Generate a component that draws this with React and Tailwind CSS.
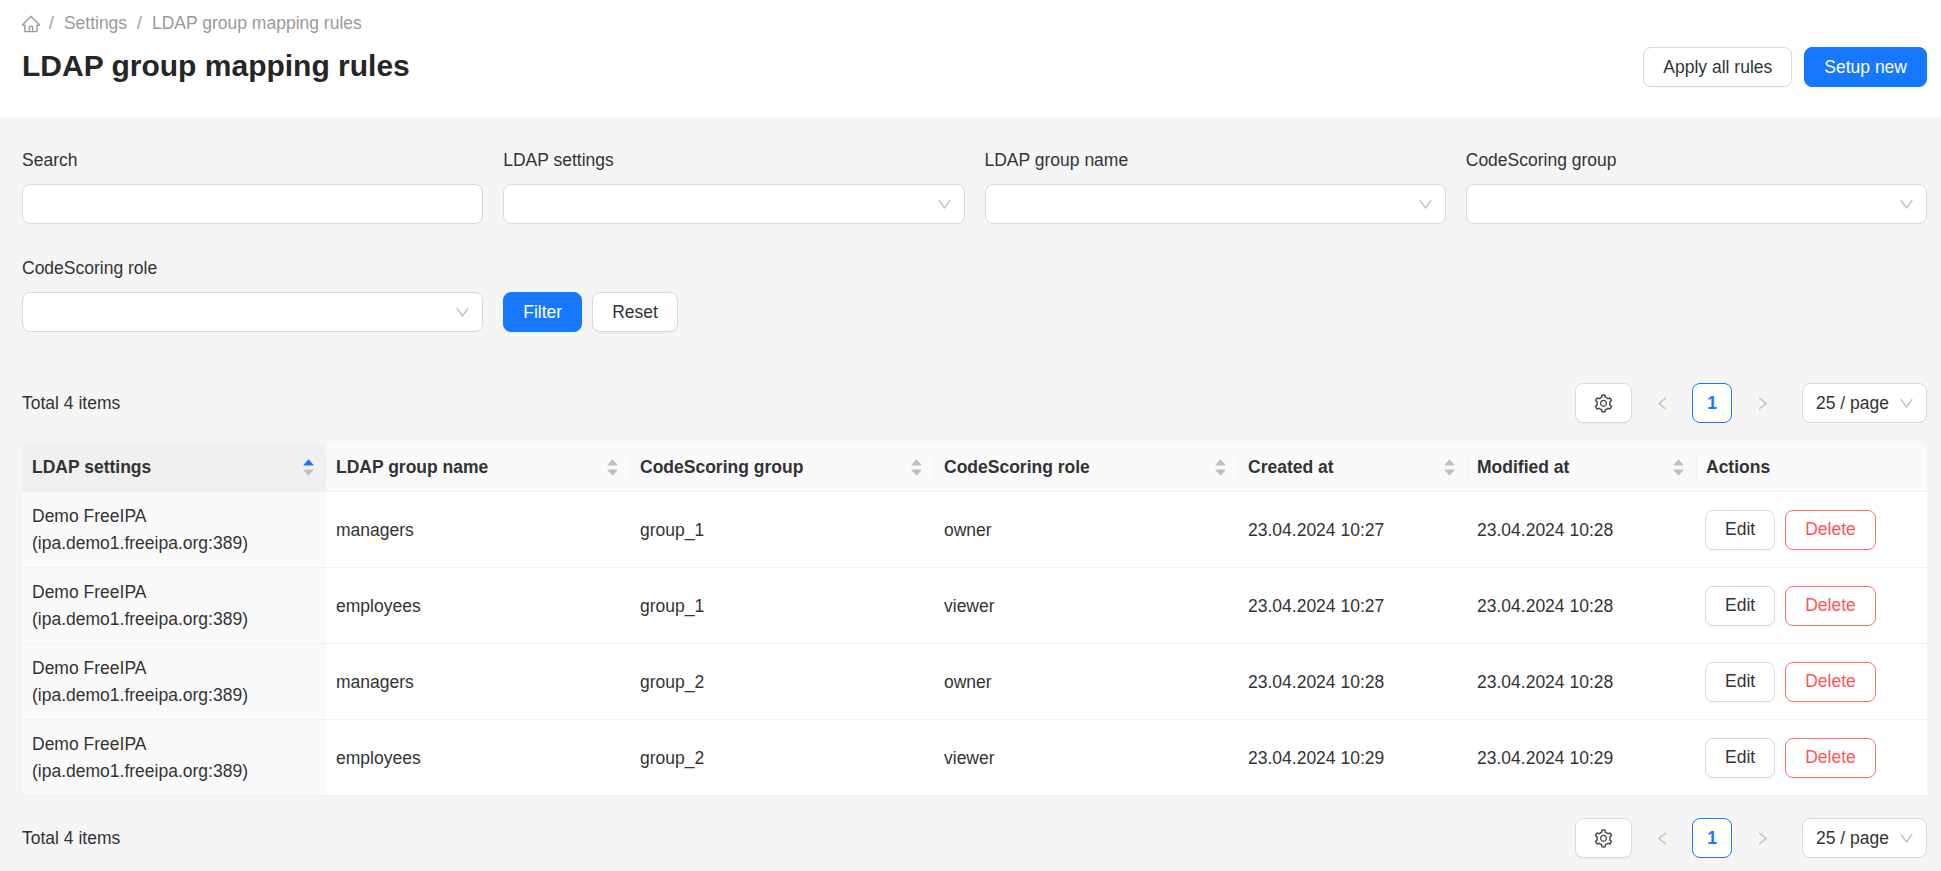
import { AiOutlineHome, AiOutlineSetting, AiOutlineDown, AiOutlineLeft, AiOutlineRight, AiFillCaretUp, AiFillCaretDown } from 'react-icons/ai';

const rows = [
  { group: 'managers', cs: 'group_1', role: 'owner', created: '23.04.2024 10:27', modified: '23.04.2024 10:28' },
  { group: 'employees', cs: 'group_1', role: 'viewer', created: '23.04.2024 10:27', modified: '23.04.2024 10:28' },
  { group: 'managers', cs: 'group_2', role: 'owner', created: '23.04.2024 10:28', modified: '23.04.2024 10:28' },
  { group: 'employees', cs: 'group_2', role: 'viewer', created: '23.04.2024 10:29', modified: '23.04.2024 10:29' },
];

const headers = ['LDAP settings', 'LDAP group name', 'CodeScoring group', 'CodeScoring role', 'Created at', 'Modified at'];

const Btn = ({ children, className = '' }) => (
  <button className={`h-10 px-[19px] rounded-lg border border-[#d9d9d9] bg-white text-[#333333] text-[17.5px] shadow-[0_2px_0_rgba(0,0,0,0.02)] whitespace-nowrap ${className}`}>
    {children}
  </button>
);

const Field = ({ label, select }) => (
  <div>
    <div className="h-[27px] leading-[27px] mb-[10px] text-[#333333]">{label}</div>
    <div className="h-10 pr-[11px] rounded-lg border border-[#d9d9d9] bg-white flex items-center justify-end">
      {select && <AiOutlineDown className="w-[17px] h-[17px] text-[#bfbfbf]" />}
    </div>
  </div>
);

const Toolbar = () => (
  <div className="flex items-center h-10">
    <span className="flex-1 text-[#333333]">Total 4 items</span>
    <button className="w-[57px] h-10 rounded-lg border border-[#d9d9d9] bg-white flex items-center justify-center shadow-[0_2px_0_rgba(0,0,0,0.02)] mr-[10px]">
      <AiOutlineSetting className="w-[21px] h-[21px] text-[#4a4a4a]" />
    </button>
    <div className="w-10 flex justify-center mr-[10px]"><AiOutlineLeft className="w-[17px] h-[17px] text-[#bfbfbf]" /></div>
    <div className="w-10 h-10 rounded-lg border border-[#1677ff] bg-white text-[#1677ff] font-bold flex items-center justify-center mr-[10px]">1</div>
    <div className="w-10 flex justify-center mr-[20px]"><AiOutlineRight className="w-[17px] h-[17px] text-[#bfbfbf]" /></div>
    <div className="w-[125px] h-10 pl-[13px] pr-[11px] rounded-lg border border-[#d9d9d9] bg-white flex items-center justify-between text-[#333333]">
      <span>25 / page</span>
      <AiOutlineDown className="w-[17px] h-[17px] text-[#bfbfbf]" />
    </div>
  </div>
);

const App = () => {
  return (
    <div className="min-h-screen overflow-hidden bg-[#f5f5f5] font-['Liberation_Sans',sans-serif] text-[17.5px]">
      <header className="h-[117px] bg-white pl-[22px] pr-[14px] pt-[10px]">
        <div className="flex items-center h-[27px] text-[#9a9a9a] gap-[10px]">
          <AiOutlineHome className="w-[20px] h-[20px] -ml-[1px] -mr-[2px]" />
          <span>/</span>
          <span>Settings</span>
          <span>/</span>
          <span>LDAP group mapping rules</span>
        </div>
        <div className="flex items-start justify-between">
          <h1 className="text-[30px] leading-[40px] font-bold text-[#262626] mt-[9px]">LDAP group mapping rules</h1>
          <div className="flex gap-3 mt-[10px]">
            <Btn>Apply all rules</Btn>
            <Btn className="!bg-[#1677ff] !border-[#1677ff] !text-white">Setup new</Btn>
          </div>
        </div>
      </header>

      <main className="pl-[22px] pr-[14px] pt-[30px]">
        <div className="grid grid-cols-4 gap-x-5 gap-y-[31px]">
          <Field label="Search" />
          <Field label="LDAP settings" select />
          <Field label="LDAP group name" select />
          <Field label="CodeScoring group" select />
          <Field label="CodeScoring role" select />
          <div className="flex items-end gap-[10px]">
            <Btn className="!bg-[#1677ff] !border-[#1677ff] !text-white">Filter</Btn>
            <Btn>Reset</Btn>
          </div>
        </div>

        <div className="mt-[51px]"><Toolbar /></div>

        <table className="mt-[20px] w-full table-fixed border-separate border-spacing-0 text-[#333333]">
          <colgroup>
            <col className="w-[304px]" />
            <col className="w-[304px]" />
            <col className="w-[304px]" />
            <col className="w-[304px]" />
            <col className="w-[229px]" />
            <col className="w-[229px]" />
            <col className="w-[231px]" />
          </colgroup>
          <thead>
            <tr>
              {headers.map((h, i) => (
                <th key={h} className={`relative h-[49px] px-[10px] text-left font-bold border-b border-[#f0f0f0] ${i === 0 ? 'bg-[#f0f0f0] rounded-tl-lg' : 'bg-[#fafafa]'}`}>
                  <div className="flex items-center justify-between">
                    <span>{h}</span>
                    <span className="flex flex-col items-center -space-y-[5px] text-[#bfbfbf]">
                      <AiFillCaretUp className={`w-[15px] h-[15px] ${i === 0 ? 'text-[#1677ff]' : ''}`} />
                      <AiFillCaretDown className="w-[15px] h-[15px]" />
                    </span>
                  </div>
                  {i > 0 && <span className="absolute left-0 top-[12px] h-[25px] w-px bg-[#f0f0f0]" />}
                </th>
              ))}
              <th className="relative h-[49px] px-[10px] text-left font-bold bg-[#fafafa] border-b border-[#f0f0f0] rounded-tr-lg">
                Actions
                <span className="absolute left-0 top-[12px] h-[25px] w-px bg-[#f0f0f0]" />
              </th>
            </tr>
          </thead>
          <tbody>
            {rows.map((r, i) => (
              <tr key={i}>
                <td className="h-[76px] px-[10px] pt-[1px] leading-[27.5px] bg-[#fafafa] border-b border-[#f0f0f0]">
                  Demo FreeIPA<br />(ipa.demo1.freeipa.org:389)
                </td>
                <td className="px-[10px] pt-[2px] bg-white border-b border-[#f0f0f0]">{r.group}</td>
                <td className="px-[10px] pt-[2px] bg-white border-b border-[#f0f0f0]">{r.cs}</td>
                <td className="px-[10px] pt-[2px] bg-white border-b border-[#f0f0f0]">{r.role}</td>
                <td className="px-[10px] pt-[2px] bg-white border-b border-[#f0f0f0]">{r.created}</td>
                <td className="px-[10px] pt-[2px] bg-white border-b border-[#f0f0f0]">{r.modified}</td>
                <td className="px-[9px] bg-white border-b border-[#f0f0f0]">
                  <div className="flex gap-[10px]">
                    <Btn>Edit</Btn>
                    <Btn className="!border-[#ff6f72] !text-[#ff5558]">Delete</Btn>
                  </div>
                </td>
              </tr>
            ))}
          </tbody>
        </table>

        <div className="mt-[22px] pb-[12px]"><Toolbar /></div>
      </main>
    </div>
  );
};

export default App;
